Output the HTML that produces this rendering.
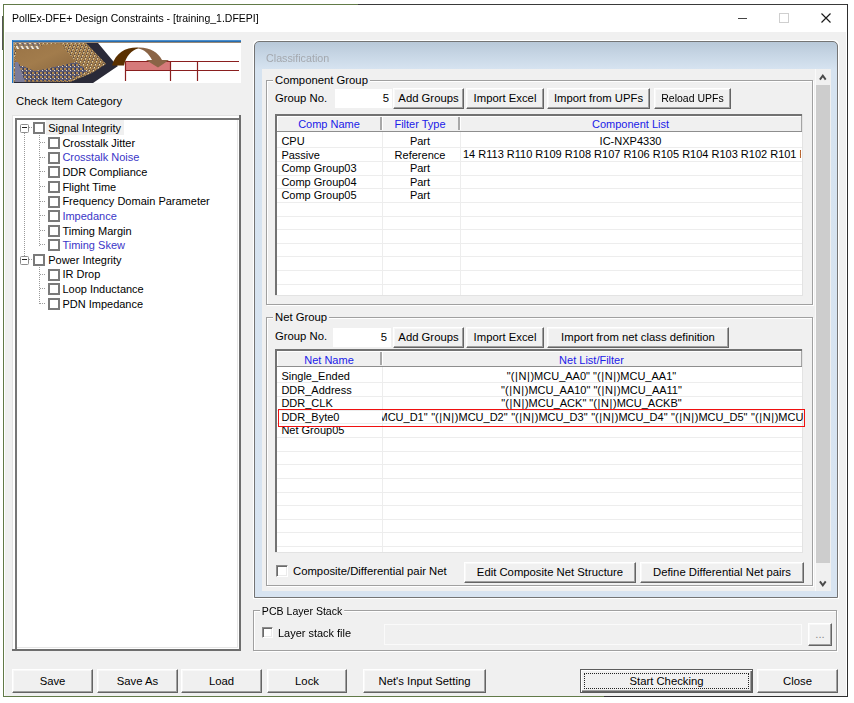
<!DOCTYPE html>
<html><head><meta charset="utf-8"><title>PollEx-DFE+ Design Constraints</title>
<style>
html,body{margin:0;padding:0;width:854px;height:703px;overflow:hidden;background:#fff;position:relative}
div,span,svg{position:absolute;box-sizing:border-box}
.t{font-family:"Liberation Sans",sans-serif;font-size:11.3px;line-height:1;white-space:pre;color:#000}
i.p{font-style:normal;padding:0 0.6px}
.btn{background:#f0f0f0;border-top:1px solid #fff;border-left:1px solid #fff;border-right:1px solid #646464;border-bottom:1px solid #646464;box-shadow:inset -1px -1px 0 #a0a0a0,inset 1px 1px 0 #f8f8f8}
.def{border:1px solid #5c5c5c;box-shadow:inset 1px 1px 0 #fff,inset -1px -1px 0 #646464,inset -2px -2px 0 #a0a0a0}
.sunk{border-top:1px solid #a0a0a0;border-left:1px solid #a0a0a0;border-right:1px solid #fff;border-bottom:1px solid #fff;box-shadow:inset 1px 1px 0 #696969,inset -1px -1px 0 #e3e3e3}
.grp{border:1px solid #a0a0a0;box-shadow:inset 1px 1px 0 #fff,1px 1px 0 #fff}
.cbx{border-top:1px solid #8c8c8c;border-left:1px solid #8c8c8c;border-right:1px solid #fff;border-bottom:1px solid #fff;box-shadow:inset 1px 1px 0 #6a6a6a,inset -1px -1px 0 #ebebeb}
</style></head>
<body>
<div style="left:0px;top:0px;width:854px;height:703px;background:#fff;"></div>
<div style="left:3px;top:4px;width:355px;height:1px;background:#627a48;"></div>
<div style="left:358px;top:4px;width:490px;height:1px;background:#3a3a3a;"></div>
<div style="left:3px;top:4px;width:1px;height:693px;background:#627a48;"></div>
<div style="left:847px;top:4px;width:1px;height:693px;background:#2e2e2e;"></div>
<div style="left:3px;top:696px;width:601px;height:1px;background:#627a48;"></div>
<div style="left:604px;top:696px;width:244px;height:1px;background:#2e2e2e;"></div>
<div style="left:2px;top:16px;width:1px;height:34px;background:#555;"></div>
<div style="left:5px;top:32px;width:841px;height:664px;background:#f0f0f0;"></div>
<span class="t" style="left:11.5px;top:12.8px;font-size:11.5px;transform:scaleX(0.911);transform-origin:0 0">PollEx-DFE+ Design Constraints - [training_1.DFEPI]</span>
<div style="left:738px;top:17.8px;width:9.3px;height:1.2px;background:#444;"></div>
<div style="left:779px;top:13px;width:10px;height:10px;border:1px solid #cfcfcf"></div>
<svg style="left:820px;top:12px" width="12" height="12"><path d="M1.5 1.5L10.5 10.5M10.5 1.5L1.5 10.5" stroke="#1a1a1a" stroke-width="1.15"/></svg>
<svg style="left:12px;top:40px" width="229" height="43" viewBox="0 0 229 43">
<defs>
<filter id="soft" x="-5%" y="-5%" width="110%" height="110%"><feGaussianBlur stdDeviation="0.6"/></filter>
<linearGradient id="chip" x1="0" y1="0" x2="1" y2="1"><stop offset="0" stop-color="#9a7446"/><stop offset="0.5" stop-color="#a27c4c"/><stop offset="1" stop-color="#8a6840"/></linearGradient>
<linearGradient id="blu" x1="0" y1="0" x2="0" y2="1"><stop offset="0" stop-color="#5aa0e0"/><stop offset="1" stop-color="#1a5a98"/></linearGradient>
<pattern id="pins" width="4" height="3" patternUnits="userSpaceOnUse" patternTransform="skewX(-20)"><rect width="4" height="3" fill="#8a6a40"/><rect x="0" y="0" width="1" height="2" fill="#e8c480"/><rect x="2" y="1" width="1" height="2" fill="#d0a060"/><rect x="3" y="2" width="1" height="1" fill="#3a3a50"/><rect x="0" y="0" width="1" height="1" fill="#f4e8c8"/></pattern>
<pattern id="pins3" width="5" height="6" patternUnits="userSpaceOnUse" patternTransform="skewX(30)"><rect width="5" height="6" fill="#9a8060"/><rect x="0" y="0" width="2" height="4" fill="#f0ece0"/><rect x="3" y="2" width="1" height="4" fill="#5a5a78"/></pattern>
<pattern id="pins2" width="4" height="4" patternUnits="userSpaceOnUse"><rect width="4" height="4" fill="#5a5870"/><rect x="0" y="0" width="2" height="2" fill="#b08850"/><rect x="2" y="2" width="1" height="1" fill="#e8e0d0"/><rect x="3" y="0" width="1" height="2" fill="#3a3a50"/></pattern>
</defs>
<rect x="0" y="0" width="229" height="43" fill="#fff"/>
<rect x="0" y="0" width="229" height="2" fill="url(#blu)"/>
<rect x="0" y="0" width="1" height="43" fill="#1a78d0"/>
<rect x="1" y="2" width="2" height="41" fill="#9a9a9a"/>
<rect x="3" y="2" width="226" height="1" fill="#9a8a78"/>
<polygon points="2,3 86,3 101,21 106,26 81,43 2,43" fill="#2b2b38" filter="url(#soft)"/>
<polygon points="2,3 74,3 94,24 80,33 58,42 2,42" fill="url(#pins)"/>
<polygon points="3,22 23,31 64,22 76,31 56,41 3,42" fill="url(#pins2)"/>
<polygon points="4,9 48,3 64,22 23,31 4,23" fill="url(#chip)"/>
<polygon points="3,22 6,22 13,42 3,42" fill="#7c7c98"/>
<rect x="4" y="3" width="24" height="6" fill="url(#pins3)"/>
<rect x="113" y="21.5" width="45" height="9" fill="#d67a7a"/>
<path d="M113.5 21.5H227M113.5 30.5H227M113.5 21.5V41M158.5 21.5V41M185.5 21.5V41" stroke="#8a1f1f" stroke-width="1.2" fill="none"/>
<path d="M100 25.4 C104 12 114 7 126 7.4 L126 8.5 C120 10 114 16 112 25.4 Z" fill="#5a3000"/>
<path d="M126 7.4 C138 7 146 12 150 20 L157 20 L146 27.5 L134 20 L140 20 C137 14 132 9 126 8.5 Z" fill="#8a6446"/>
</svg>
<span class="t" style="left:16px;top:95.93px;">Check Item Category</span>
<div style="left:12px;top:115px;width:229px;height:536px;background:#fff;"></div>
<div style="left:12px;top:115px;width:227px;height:1px;background:#e3e3e3;"></div>
<div style="left:12px;top:115px;width:1px;height:534px;background:#e3e3e3;"></div>
<div style="left:239px;top:115px;width:2px;height:536px;background:#6e6e6e;"></div>
<div style="left:12px;top:649px;width:229px;height:2px;background:#6e6e6e;"></div>
<div style="left:15px;top:118px;width:224px;height:2px;background:#767676;"></div>
<div style="left:15px;top:118px;width:2px;height:531px;background:#767676;"></div>
<div style="left:17px;top:647px;width:221px;height:1px;background:#e6e6e6;"></div>
<div style="left:237px;top:120px;width:1px;height:528px;background:#e6e6e6;"></div>
<div style="left:46px;top:120px;width:78px;height:14.5px;background:#f0f0f0;"></div>
<div style="left:20px;top:124px;width:9px;height:9px;border:1px solid #8c8c8c;border-radius:1.5px;background:#fff"></div>
<div style="left:22px;top:127px;width:5px;height:1px;background:#222;"></div>
<div style="left:33px;top:122px;width:12px;height:12px;border:2px solid #7a7a7a;background:#fff"></div>
<span class="t" style="left:48.2px;top:123.19px;font-size:11px;">Signal Integrity</span>
<div style="left:48px;top:137px;width:12px;height:12px;border:2px solid #7a7a7a;background:#fff"></div>
<span class="t" style="left:62.4px;top:137.81px;font-size:11px;">Crosstalk Jitter</span>
<div style="left:48px;top:152px;width:12px;height:12px;border:2px solid #7a7a7a;background:#fff"></div>
<span class="t" style="left:62.4px;top:152.44px;font-size:11px;color:#3a36c8;">Crosstalk Noise</span>
<div style="left:48px;top:166px;width:12px;height:12px;border:2px solid #7a7a7a;background:#fff"></div>
<span class="t" style="left:62.4px;top:167.06px;font-size:11px;">DDR Compliance</span>
<div style="left:48px;top:181px;width:12px;height:12px;border:2px solid #7a7a7a;background:#fff"></div>
<span class="t" style="left:62.4px;top:181.69px;font-size:11px;">Flight Time</span>
<div style="left:48px;top:196px;width:12px;height:12px;border:2px solid #7a7a7a;background:#fff"></div>
<span class="t" style="left:62.4px;top:196.31px;font-size:11px;">Frequency Domain Parameter</span>
<div style="left:48px;top:210px;width:12px;height:12px;border:2px solid #7a7a7a;background:#fff"></div>
<span class="t" style="left:62.4px;top:210.94px;font-size:11px;color:#3a36c8;">Impedance</span>
<div style="left:48px;top:225px;width:12px;height:12px;border:2px solid #7a7a7a;background:#fff"></div>
<span class="t" style="left:62.4px;top:225.56px;font-size:11px;">Timing Margin</span>
<div style="left:48px;top:239px;width:12px;height:12px;border:2px solid #7a7a7a;background:#fff"></div>
<span class="t" style="left:62.4px;top:240.19px;font-size:11px;color:#3a36c8;">Timing Skew</span>
<div style="left:20px;top:256px;width:9px;height:9px;border:1px solid #8c8c8c;border-radius:1.5px;background:#fff"></div>
<div style="left:22px;top:259px;width:5px;height:1px;background:#222;"></div>
<div style="left:33px;top:254px;width:12px;height:12px;border:2px solid #7a7a7a;background:#fff"></div>
<span class="t" style="left:48.2px;top:254.81px;font-size:11px;">Power Integrity</span>
<div style="left:48px;top:269px;width:12px;height:12px;border:2px solid #7a7a7a;background:#fff"></div>
<span class="t" style="left:62.4px;top:269.44px;font-size:11px;">IR Drop</span>
<div style="left:48px;top:283px;width:12px;height:12px;border:2px solid #7a7a7a;background:#fff"></div>
<span class="t" style="left:62.4px;top:284.06px;font-size:11px;">Loop Inductance</span>
<div style="left:48px;top:298px;width:12px;height:12px;border:2px solid #7a7a7a;background:#fff"></div>
<span class="t" style="left:62.4px;top:298.69px;font-size:11px;">PDN Impedance</span>
<svg style="left:0;top:0" width="854" height="703"><path d="M29 127.5H32 M40 142.5H46 M40 157.5H46 M40 171.5H46 M40 186.5H46 M40 201.5H46 M40 215.5H46 M40 230.5H46 M40 244.5H46 M29 259.5H32 M40 274.5H46 M40 288.5H46 M40 303.5H46 M24.5 133V256 M39.5 135V246 M39.5 267V304" stroke="#9a9a9a" stroke-width="1" stroke-dasharray="1 1" fill="none"/></svg>
<div style="left:253px;top:40px;width:586px;height:559px;border-radius:5px 5px 0 0;background:#fff"></div>
<div style="left:254px;top:41px;width:584px;height:557px;border:1.5px solid #747474;border-radius:5px 5px 0 0;background:linear-gradient(#b8c8d8 0px,#c6d5e4 12px,#d6e3f0 27px,#d8e4f1 100%)"></div>
<span class="t" style="left:266px;top:52.83px;color:#a4a8ae;transform:scaleX(0.95);transform-origin:0 0;">Classification</span>
<div style="left:262px;top:69px;width:569px;height:522px;background:#f0f0f0;"></div>
<div style="left:815px;top:69px;width:1px;height:522px;background:#fafafa;"></div>
<div style="left:816px;top:69px;width:15px;height:522px;background:#f0f0f0;"></div>
<div style="left:816px;top:84.5px;width:14px;height:478px;background:#cdcdcd;"></div>
<svg style="left:816px;top:69px" width="15" height="16"><path d="M3.9 10.6L6.8 6.6L9.7 10.6" stroke="#4a4a4a" stroke-width="1.9" fill="none"/></svg>
<svg style="left:816px;top:574px" width="15" height="16"><path d="M3.9 7.4L6.8 11.4L9.7 7.4" stroke="#4a4a4a" stroke-width="1.9" fill="none"/></svg>
<div class="grp" style="left:266px;top:80px;width:547px;height:225px"></div>
<span class="t" style="left:273px;top:74.93px;padding:0 2px;background:#f0f0f0;">Component Group</span>
<span class="t" style="left:275px;top:93.03px;">Group No.</span>
<div style="left:335px;top:89px;width:57px;height:19px;background:#fff;"></div>
<span class="t" style="left:335px;width:54px;text-align:right;top:92.93px;">5</span>
<div class="btn" style="left:393px;top:88px;width:71px;height:21px"></div>
<span class="t" style="left:393px;width:71px;text-align:center;top:93.13px;">Add Groups</span>
<div class="btn" style="left:466px;top:88px;width:78px;height:21px"></div>
<span class="t" style="left:466px;width:78px;text-align:center;top:93.13px;">Import Excel</span>
<div class="btn" style="left:547px;top:88px;width:103px;height:21px"></div>
<span class="t" style="left:547px;width:103px;text-align:center;top:93.13px;">Import from UPFs</span>
<div class="btn" style="left:654px;top:88px;width:77px;height:21px"></div>
<span class="t" style="left:654px;width:77px;text-align:center;top:93.13px;transform:scaleX(0.93);transform-origin:50% 0;">Reload UPFs</span>
<div style="left:275px;top:114px;width:528px;height:182px;background:#fff;"></div>
<div style="left:275px;top:114px;width:527px;height:2px;background:#727272;"></div>
<div style="left:275px;top:114px;width:2px;height:181px;background:#727272;"></div>
<div style="left:802px;top:114px;width:1px;height:182px;background:#e3e3e3;"></div>
<div style="left:275px;top:295px;width:528px;height:1px;background:#e3e3e3;"></div>
<div style="left:277px;top:116px;width:525px;height:15px;background:#f0f0f0;"></div>
<div style="left:277px;top:116px;width:525px;height:1px;background:#fff;"></div>
<div style="left:277px;top:116px;width:1px;height:15px;background:#fff;"></div>
<div style="left:277px;top:131px;width:525px;height:1px;background:#8e8e8e;"></div>
<div style="left:801px;top:116px;width:1px;height:15px;background:#a4a4a4;"></div>
<div style="left:380px;top:117px;width:2px;height:13px;background:#a8a8a8;"></div>
<div style="left:382px;top:117px;width:1px;height:13px;background:#fff;"></div>
<div style="left:458px;top:117px;width:2px;height:13px;background:#a8a8a8;"></div>
<div style="left:460px;top:117px;width:1px;height:13px;background:#fff;"></div>
<div style="left:277px;top:147.3px;width:525px;height:1px;background:#ededed;"></div>
<div style="left:277px;top:160.94px;width:525px;height:1px;background:#ededed;"></div>
<div style="left:277px;top:174.58px;width:525px;height:1px;background:#ededed;"></div>
<div style="left:277px;top:188.22000000000003px;width:525px;height:1px;background:#ededed;"></div>
<div style="left:277px;top:201.86px;width:525px;height:1px;background:#ededed;"></div>
<div style="left:277px;top:215.5px;width:525px;height:1px;background:#ededed;"></div>
<div style="left:277px;top:229.14000000000001px;width:525px;height:1px;background:#ededed;"></div>
<div style="left:277px;top:242.78000000000003px;width:525px;height:1px;background:#ededed;"></div>
<div style="left:277px;top:256.42px;width:525px;height:1px;background:#ededed;"></div>
<div style="left:277px;top:270.06px;width:525px;height:1px;background:#ededed;"></div>
<div style="left:277px;top:283.70000000000005px;width:525px;height:1px;background:#ededed;"></div>
<div style="left:382px;top:132px;width:1px;height:163px;background:#ededed;"></div>
<div style="left:460px;top:132px;width:1px;height:163px;background:#ededed;"></div>
<span class="t" style="left:277px;width:104px;text-align:center;top:119.49px;font-size:11.0px;color:#2020e8;">Comp Name</span>
<span class="t" style="left:381px;width:78px;text-align:center;top:119.49px;font-size:11.0px;color:#2020e8;">Filter Type</span>
<span class="t" style="left:459px;width:343px;text-align:center;top:119.49px;font-size:11.0px;color:#2020e8;">Component List</span>
<span class="t" style="left:281.4px;top:135.89px;font-size:11.0px;">CPU</span>
<span class="t" style="left:381px;width:78px;text-align:center;top:135.89px;font-size:11.0px;">Part</span>
<span class="t" style="left:459px;width:343px;text-align:center;top:135.89px;font-size:11.0px;">IC-NXP4330</span>
<span class="t" style="left:281.4px;top:149.53px;font-size:11.0px;">Passive</span>
<span class="t" style="left:381px;width:78px;text-align:center;top:149.53px;font-size:11.0px;">Reference</span>
<span class="t" style="left:281.4px;top:163.17px;font-size:11.0px;">Comp Group03</span>
<span class="t" style="left:381px;width:78px;text-align:center;top:163.17px;font-size:11.0px;">Part</span>
<span class="t" style="left:281.4px;top:176.81px;font-size:11.0px;">Comp Group04</span>
<span class="t" style="left:381px;width:78px;text-align:center;top:176.81px;font-size:11.0px;">Part</span>
<span class="t" style="left:281.4px;top:190.45px;font-size:11.0px;">Comp Group05</span>
<span class="t" style="left:381px;width:78px;text-align:center;top:190.45px;font-size:11.0px;">Part</span>
<div style="left:459px;top:148.49px;width:342px;height:14px;overflow:hidden"><span class="t" style="left:4px;top:1px;font-size:11.0px">14 R113 R110 R109 R108 R107 R106 R105 R104 R103 R102 R101 R100</span></div>
<div class="grp" style="left:266px;top:317px;width:547px;height:269px"></div>
<span class="t" style="left:273px;top:311.93px;padding:0 2px;background:#f0f0f0;">Net Group</span>
<span class="t" style="left:275px;top:330.53px;">Group No.</span>
<div style="left:333px;top:328px;width:58px;height:19px;background:#fff;"></div>
<span class="t" style="left:333px;width:54px;text-align:right;top:331.63px;">5</span>
<div class="btn" style="left:393px;top:327px;width:71px;height:21px"></div>
<span class="t" style="left:393px;width:71px;text-align:center;top:332.13px;">Add Groups</span>
<div class="btn" style="left:466px;top:327px;width:78px;height:21px"></div>
<span class="t" style="left:466px;width:78px;text-align:center;top:332.13px;">Import Excel</span>
<div class="btn" style="left:547px;top:327px;width:182px;height:21px"></div>
<span class="t" style="left:547px;width:182px;text-align:center;top:332.13px;">Import from net class definition</span>
<div style="left:275px;top:349px;width:528px;height:204px;background:#fff;"></div>
<div style="left:275px;top:349px;width:527px;height:2px;background:#727272;"></div>
<div style="left:275px;top:349px;width:2px;height:203px;background:#727272;"></div>
<div style="left:802px;top:349px;width:1px;height:204px;background:#e3e3e3;"></div>
<div style="left:275px;top:552px;width:528px;height:1px;background:#e3e3e3;"></div>
<div style="left:277px;top:351px;width:525px;height:15px;background:#f0f0f0;"></div>
<div style="left:277px;top:351px;width:525px;height:1px;background:#fff;"></div>
<div style="left:277px;top:351px;width:1px;height:15px;background:#fff;"></div>
<div style="left:277px;top:366px;width:525px;height:1px;background:#8e8e8e;"></div>
<div style="left:801px;top:351px;width:1px;height:15px;background:#a4a4a4;"></div>
<div style="left:380px;top:352px;width:2px;height:13px;background:#a8a8a8;"></div>
<div style="left:382px;top:352px;width:1px;height:13px;background:#fff;"></div>
<div style="left:277px;top:382.4px;width:525px;height:1px;background:#ededed;"></div>
<div style="left:277px;top:396.03999999999996px;width:525px;height:1px;background:#ededed;"></div>
<div style="left:277px;top:409.67999999999995px;width:525px;height:1px;background:#ededed;"></div>
<div style="left:277px;top:423.32px;width:525px;height:1px;background:#ededed;"></div>
<div style="left:277px;top:436.96px;width:525px;height:1px;background:#ededed;"></div>
<div style="left:277px;top:450.59999999999997px;width:525px;height:1px;background:#ededed;"></div>
<div style="left:277px;top:464.24px;width:525px;height:1px;background:#ededed;"></div>
<div style="left:277px;top:477.88px;width:525px;height:1px;background:#ededed;"></div>
<div style="left:277px;top:491.52px;width:525px;height:1px;background:#ededed;"></div>
<div style="left:277px;top:505.15999999999997px;width:525px;height:1px;background:#ededed;"></div>
<div style="left:277px;top:518.8px;width:525px;height:1px;background:#ededed;"></div>
<div style="left:277px;top:532.44px;width:525px;height:1px;background:#ededed;"></div>
<div style="left:277px;top:546.0799999999999px;width:525px;height:1px;background:#ededed;"></div>
<div style="left:382px;top:367px;width:1px;height:185px;background:#ededed;"></div>
<span class="t" style="left:277px;width:104px;text-align:center;top:354.69px;font-size:11.0px;color:#2020e8;">Net Name</span>
<span class="t" style="left:381px;width:421px;text-align:center;top:354.69px;font-size:11.0px;color:#2020e8;">Net List/Filter</span>
<span class="t" style="left:281.4px;top:370.89px;font-size:11.0px;">Single_Ended</span>
<span class="t" style="left:381px;width:421px;text-align:center;top:370.89px;font-size:11.0px;">&quot;(<i class="p">|</i>N<i class="p">|</i>)MCU_AA0&quot; &quot;(<i class="p">|</i>N<i class="p">|</i>)MCU_AA1&quot;</span>
<span class="t" style="left:281.4px;top:384.53px;font-size:11.0px;">DDR_Address</span>
<span class="t" style="left:381px;width:421px;text-align:center;top:384.53px;font-size:11.0px;">&quot;(<i class="p">|</i>N<i class="p">|</i>)MCU_AA10&quot; &quot;(<i class="p">|</i>N<i class="p">|</i>)MCU_AA11&quot;</span>
<span class="t" style="left:281.4px;top:398.17px;font-size:11.0px;">DDR_CLK</span>
<span class="t" style="left:381px;width:421px;text-align:center;top:398.17px;font-size:11.0px;">&quot;(<i class="p">|</i>N<i class="p">|</i>)MCU_ACK&quot; &quot;(<i class="p">|</i>N<i class="p">|</i>)MCU_ACKB&quot;</span>
<span class="t" style="left:281.4px;top:411.81px;font-size:11.0px;">DDR_Byte0</span>
<span class="t" style="left:281.4px;top:425.45px;font-size:11.0px;">Net Group05</span>
<div style="left:382px;top:410.59px;width:420.5px;height:14px;overflow:hidden"><span class="t" style="left:-3.5px;top:1px;font-size:11.0px;word-spacing:0.5px">MCU_D1&quot; &quot;(<i class="p">|</i>N<i class="p">|</i>)MCU_D2&quot; &quot;(<i class="p">|</i>N<i class="p">|</i>)MCU_D3&quot; &quot;(<i class="p">|</i>N<i class="p">|</i>)MCU_D4&quot; &quot;(<i class="p">|</i>N<i class="p">|</i>)MCU_D5&quot; &quot;(<i class="p">|</i>N<i class="p">|</i>)MCU_D6&quot;</span></div>
<div style="left:277.5px;top:409px;width:527.5px;height:18px;border:1.3px solid #f01010;box-sizing:border-box"></div>
<div class="cbx" style="left:276px;top:565px;width:12px;height:12px;background:#fff"></div>
<span class="t" style="left:293px;top:565.73px;">Composite/Differential pair Net</span>
<div class="btn" style="left:464px;top:562px;width:172px;height:21px"></div>
<span class="t" style="left:464px;width:172px;text-align:center;top:567.13px;">Edit Composite Net Structure</span>
<div class="btn" style="left:640px;top:562px;width:164px;height:21px"></div>
<span class="t" style="left:640px;width:164px;text-align:center;top:567.13px;">Define Differential Net pairs</span>
<div class="grp" style="left:253px;top:610px;width:584px;height:41px"></div>
<span class="t" style="left:260px;top:606.43px;padding:0 2px;background:#f0f0f0;transform:scaleX(0.935);transform-origin:0 0;">PCB Layer Stack</span>
<div class="cbx" style="left:262px;top:627px;width:11px;height:11px;background:#fff"></div>
<span class="t" style="left:278.4px;top:627.63px;transform:scaleX(0.97);transform-origin:0 0;">Layer stack file</span>
<div style="left:384px;top:624px;width:418px;height:21px;border:1px solid #fafafa;box-sizing:border-box;background:#f0f0f0"></div>
<div class="btn" style="left:808px;top:623px;width:24px;height:23px"></div>
<span class="t" style="left:808px;width:24px;text-align:center;top:629.13px;color:#8a8a8a;">...</span>
<div class="btn" style="left:12px;top:669px;width:81px;height:24px"></div>
<span class="t" style="left:12px;width:81px;text-align:center;top:675.63px;">Save</span>
<div class="btn" style="left:97px;top:669px;width:81px;height:24px"></div>
<span class="t" style="left:97px;width:81px;text-align:center;top:675.63px;">Save As</span>
<div class="btn" style="left:181px;top:669px;width:81px;height:24px"></div>
<span class="t" style="left:181px;width:81px;text-align:center;top:675.63px;">Load</span>
<div class="btn" style="left:267px;top:669px;width:80px;height:24px"></div>
<span class="t" style="left:267px;width:80px;text-align:center;top:675.63px;">Lock</span>
<div class="btn" style="left:363px;top:669px;width:123px;height:24px"></div>
<span class="t" style="left:363px;width:123px;text-align:center;top:675.63px;">Net&#39;s Input Setting</span>
<div class="btn def" style="left:580px;top:669px;width:173px;height:24px"></div>
<span class="t" style="left:580px;width:173px;text-align:center;top:675.63px;">Start Checking</span>
<div style="left:584px;top:673px;width:165px;height:16px;border:1px dotted #222;box-sizing:border-box"></div>
<div class="btn" style="left:757px;top:669px;width:81px;height:24px"></div>
<span class="t" style="left:757px;width:81px;text-align:center;top:675.63px;">Close</span>
</body></html>
